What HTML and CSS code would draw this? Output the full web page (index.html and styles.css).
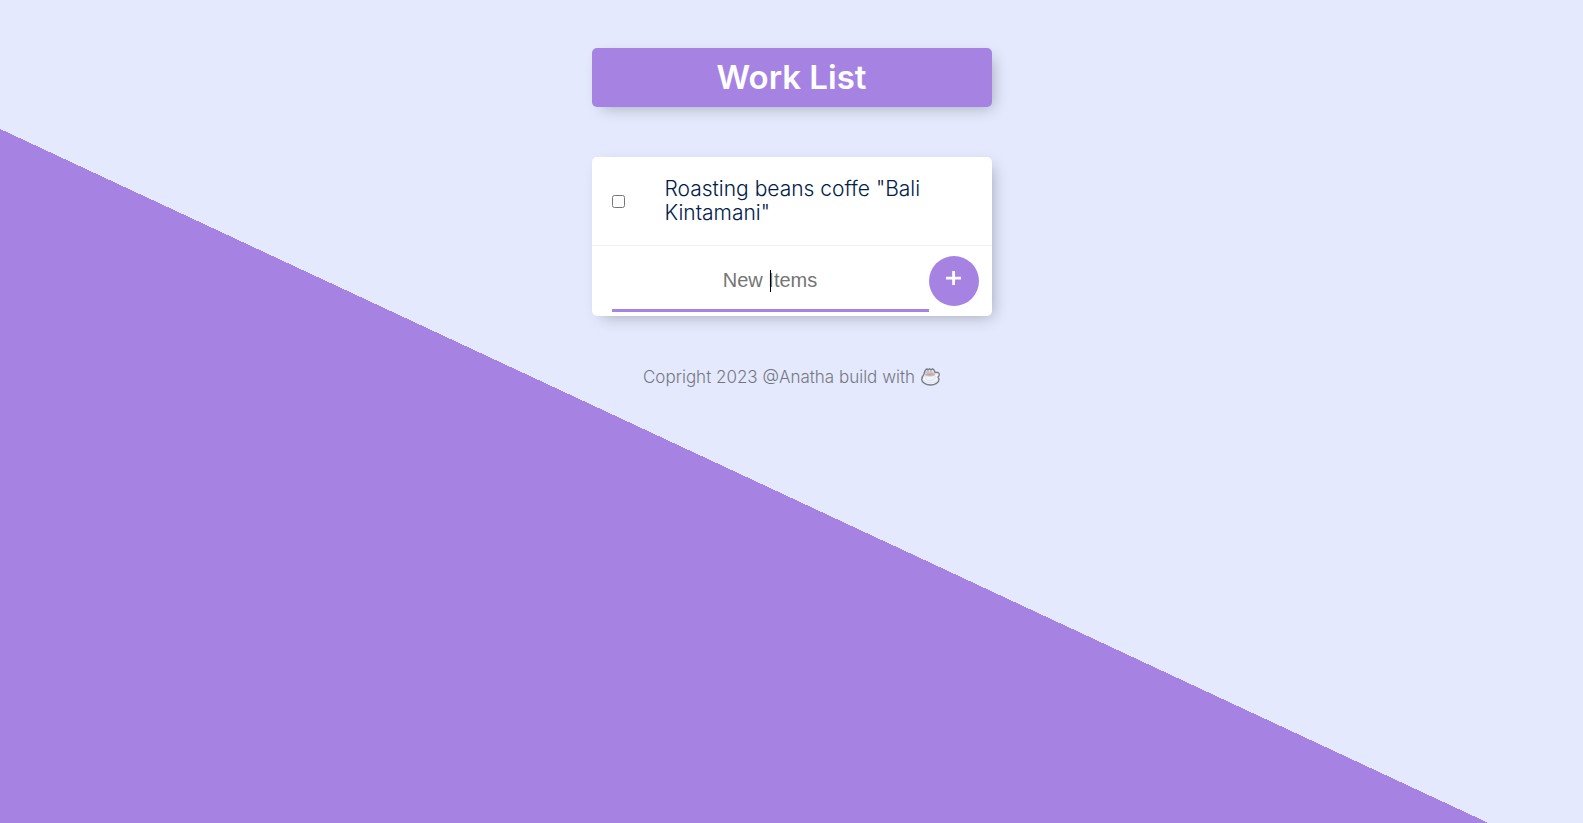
FILE: index.html
```html
<!DOCTYPE html>
<html lang="en">
<head>
<meta charset="utf-8">
<meta name="viewport" content="width=device-width, initial-scale=1">
<title>Work List</title>
<link rel="stylesheet" href="styles.css">
</head>
<body>
<header class="box heading"><h1 class="title">Work List</h1></header>
<main class="box">
  <div class="item">
    <input class="check" type="checkbox" id="item-1">
    <label class="item-text" for="item-1">Roasting beans coffe "Bali Kintamani"</label>
  </div>
  <form class="new-item">
    <div class="field">
      <input class="new-input" type="text" placeholder="New Items" aria-label="New item" autocomplete="off">
      <span class="caret"></span>
    </div>
    <button class="add" type="button" aria-label="Add item">
      <svg width="16" height="16" viewBox="0 0 16 16" aria-hidden="true"><path d="M0 6.800h15v2.600H0zM6.200 1h2.800v14H6.200z" fill="#fff"/></svg>
    </button>
  </form>
</main>
<footer class="footer">
  <span>Copright 2023 @Anatha build with</span>
  <svg class="cup" width="19" height="18" viewBox="0 0 19 18" aria-hidden="true">
    <path d="M3 6.500C3 4.500 4 3.500 4.500 2L6 1l1 1 1.500-1.200L10 2l1.500-1.200L13 2l1 2.500 3 0c1.800 1 1.500 3.500 0 4.500l1 2.500c0 3-4 5.500-8.500 5.500S.8 14.500.8 11.500C.8 9.500 1.500 8 3 6.500z" fill="#fff" stroke="#111" stroke-width="1.400"/>
    <path d="M4 5 5 2.500l1 1 1-1 1.500 1L10 2.500l1.500 1L13 5z" fill="#999"/>
    <ellipse cx="9" cy="6.500" rx="5" ry="1.700" fill="#b5652f" stroke="#bbb" stroke-width=".8"/>
    <path d="M2.500 12c2 3.500 11 3.500 14 0M4 8c0 6 9.500 6 10.500 0" fill="none" stroke="#ccc" stroke-width=".8"/>
  </svg>
</footer>
</body>
</html>
```
FILE: styles.css
```css
* {
  box-sizing: border-box;
}

body {
  margin: 0;
  padding: 48px 8px;
  min-height: 100vh;
  background: #e4e9fd linear-gradient(25deg, #a683e3 50%, #e4e9fd 50%) 0 0 / 100% 996px no-repeat;
  font-family: Inter, sans-serif;
}

.box {
  max-width: 400px;
  margin: 0 auto 50px;
  background: #fff;
  border-radius: 5px;
  box-shadow: 5px 5px 15px -5px rgba(0, 0, 0, 0.3);
}

.heading {
  padding: 10px;
  background: #a683e3;
  text-align: center;
}

.title {
  margin: 0;
  color: #fff;
  font-size: 33px;
  line-height: 39px;
  font-weight: 600;
}

.item {
  display: flex;
  align-items: center;
  padding: 20px;
  border-bottom: 1px solid #f1f1f1;
}

.check {
  flex: none;
  width: 13px;
  height: 13px;
  margin: 0 40px 0 0;
}

.item-text {
  max-width: 280px;
  color: #00204a;
  font-size: 21px;
  line-height: 24px;
  font-weight: 300;
}

.new-item {
  display: flex;
  align-items: center;
  min-height: 70px;
  padding: 0 13px 0 20px;
}

.field {
  position: relative;
  flex: 1;
}

.new-input {
  display: block;
  width: 100%;
  height: 62px;
  padding: 2px 0 0;
  border: 0;
  border-bottom: 3px solid #a683e3;
  outline: 0;
  background: transparent;
  font-family: "Liberation Sans", Arial, sans-serif;
  font-size: 20px;
  text-align: center;
}

.new-input::placeholder {
  color: #757575;
}

.caret {
  position: absolute;
  left: 50%;
  top: 20px;
  width: 1px;
  height: 22px;
  background: #000;
}

.add {
  display: flex;
  justify-content: center;
  width: 50px;
  height: 50px;
  padding: 14px 0 0;
  border: 0;
  border-radius: 50%;
  background: #a683e3;
}

.footer {
  display: flex;
  justify-content: center;
  align-items: center;
  gap: 6px;
  color: #000;
  font-size: 17px;
  line-height: 22px;
  font-weight: 300;
  opacity: 0.5;
}
```
